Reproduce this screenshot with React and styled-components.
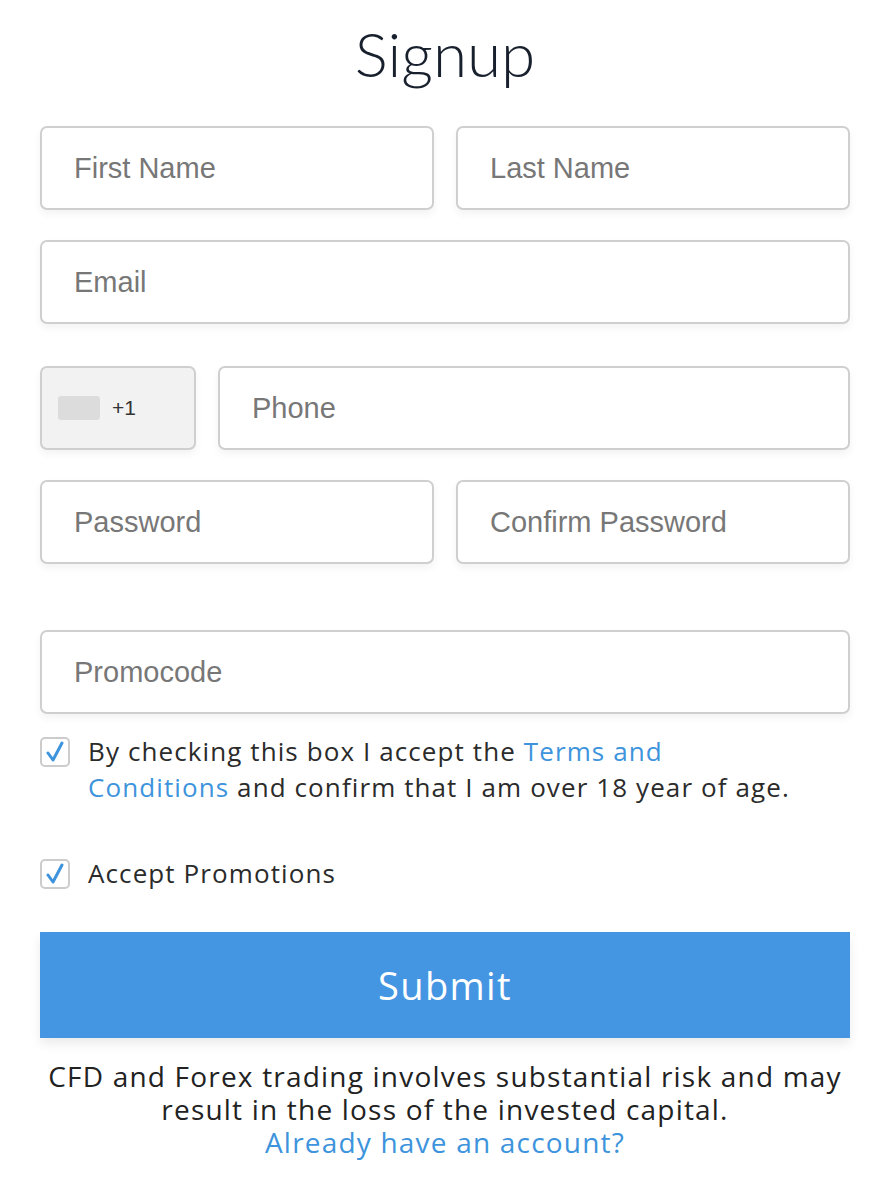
import styled, { createGlobalStyle } from "styled-components";

const GlobalStyle = createGlobalStyle`
  * { box-sizing: border-box; }
  body {
    margin: 0;
    background: #fff;
    font-family: "Open Sans", "Liberation Sans", sans-serif;
  }
`;

const Page = styled.div`
  width: 892px;
  padding: 14px 42px 40px 40px;
  display: flex;
  flex-direction: column;
`;

const Title = styled.h1`
  margin: 0 0 34px 0;
  text-align: center;
  font-family: "Lato", "Liberation Sans", sans-serif;
  font-weight: 300;
  font-size: 62px;
  line-height: 78px;
  color: #18202e;
`;

const Row = styled.div`
  display: flex;
  gap: 22px;
  margin-bottom: ${(p) => p.$gap || 30}px;
`;

const Field = styled.input`
  flex: 1;
  min-width: 0;
  height: 84px;
  padding: 0 32px;
  border: 2px solid #cfcfcf;
  border-radius: 7px;
  box-shadow: 0 4px 8px rgba(0, 0, 0, 0.05);
  font-family: "Liberation Sans", Arial, sans-serif;
  font-size: 29px;
  color: #333;
  outline: none;

  &::placeholder {
    color: #777;
  }
`;

const CodeBox = styled.div`
  width: 156px;
  flex: none;
  height: 84px;
  display: flex;
  align-items: center;
  gap: 12px;
  padding: 0 16px;
  background: #f2f2f2;
  border: 2px solid #cfcfcf;
  border-radius: 7px;
  box-shadow: 0 4px 8px rgba(0, 0, 0, 0.05);
  font-family: "Liberation Sans", Arial, sans-serif;
  font-size: 21px;
  color: #333;
`;

const Flag = styled.span`
  width: 42px;
  height: 24px;
  border-radius: 3px;
  background: #dcdcdc;
`;

const CheckRow = styled.label`
  display: flex;
  align-items: flex-start;
  gap: 18px;
  margin-bottom: ${(p) => p.$gap || 0}px;
  font-size: 26px;
  letter-spacing: 1.1px;
  line-height: 36px;
  color: #2b2b2b;
`;

const CheckText = styled.span`
  max-width: 715px;
`;

const Box = styled.span`
  flex: none;
  width: 30px;
  height: 30px;
  margin-top: 4px;
  display: flex;
  align-items: center;
  justify-content: center;
  border: 2px solid #cccccc;
  border-radius: 5px;
  background: #fff;
`;

const Link = styled.a`
  color: #3d94dc;
  text-decoration: none;
`;

const Submit = styled.button`
  height: 106px;
  margin-top: 41px;
  border: none;
  background: #4596e2;
  color: #fff;
  font-family: "Open Sans", "Liberation Sans", sans-serif;
  font-size: 38px;
  letter-spacing: 1.4px;
  box-shadow: 0 6px 10px rgba(0, 0, 0, 0.08);
  cursor: pointer;
`;

const Footer = styled.p`
  margin: 22px 0 0 0;
  text-align: center;
  font-size: 28px;
  letter-spacing: 1.2px;
  line-height: 33px;
  color: #222;
`;

function Check() {
  return (
    <Box>
      <svg width="20" height="22" viewBox="0 0 20 22">
        <path
          d="M3 12 L8 19 L17 2"
          fill="none"
          stroke="#3d94dc"
          strokeWidth="3"
          strokeLinecap="round"
          strokeLinejoin="round"
        />
      </svg>
    </Box>
  );
}

export default function App() {
  return (
    <Page>
      <GlobalStyle />
      <Title>Signup</Title>
      <Row>
        <Field placeholder="First Name" />
        <Field placeholder="Last Name" />
      </Row>
      <Row $gap={42}>
        <Field placeholder="Email" />
      </Row>
      <Row>
        <CodeBox>
          <Flag />
          +1
        </CodeBox>
        <Field placeholder="Phone" />
      </Row>
      <Row $gap={66}>
        <Field placeholder="Password" type="password" />
        <Field placeholder="Confirm Password" type="password" />
      </Row>
      <Row $gap={19}>
        <Field placeholder="Promocode" />
      </Row>
      <CheckRow $gap={50}>
        <Check />
        <CheckText>
          By checking this box I accept the <Link href="#">Terms and Conditions</Link> and
          confirm that I am over 18 year of age.
        </CheckText>
      </CheckRow>
      <CheckRow>
        <Check />
        <CheckText>Accept Promotions</CheckText>
      </CheckRow>
      <Submit>Submit</Submit>
      <Footer>
        CFD and Forex trading involves substantial risk and may result in the loss of the
        invested capital.
        <br />
        <Link href="#">Already have an account?</Link>
      </Footer>
    </Page>
  );
}
